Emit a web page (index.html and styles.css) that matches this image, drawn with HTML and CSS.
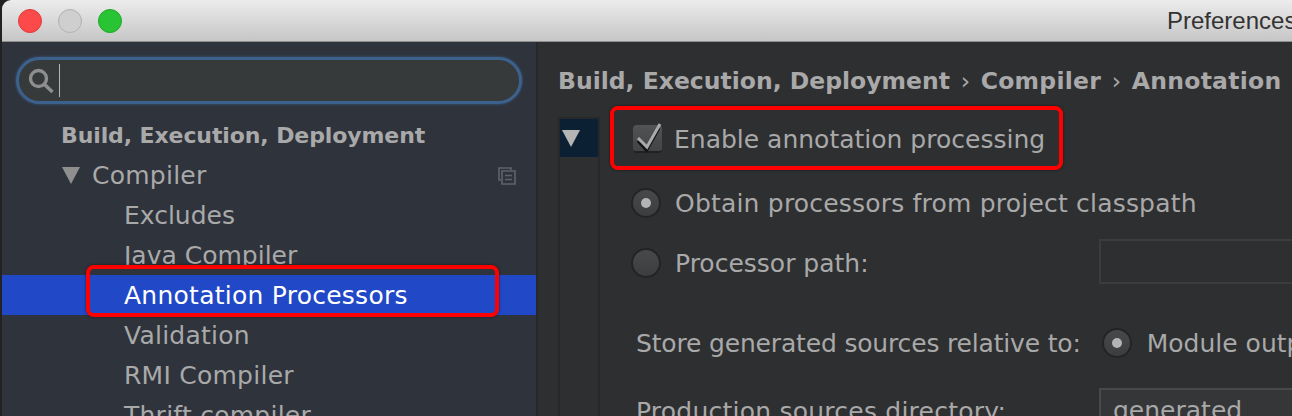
FILE: index.html
```html
<!DOCTYPE html>
<html lang="en">
<head>
  <meta charset="UTF-8">
  <title>Preferences</title>
  <link rel="stylesheet" href="styles.css">
</head>
<body>
  <div class="window">
    <!-- Title bar -->
    <header class="titlebar">
      <span class="light light-close"></span>
      <span class="light light-min"></span>
      <span class="light light-zoom"></span>
      <span class="title">Preferences</span>
    </header>

    <div class="content">
      <!-- Settings tree -->
      <aside class="sidebar">
        <div class="search">
          <svg class="search-icon" width="26" height="26" viewBox="0 0 26 26">
            <circle cx="10.5" cy="10.5" r="8" fill="none" stroke="#8e8e8e" stroke-width="3.4"/>
            <path d="M16.5 16.5L24.5 24" fill="none" stroke="#8e8e8e" stroke-width="3.6"/>
          </svg>
          <span class="caret"></span>
        </div>
        <ul class="tree">
          <li class="tree-row tree-group">Build, Execution, Deployment</li>
          <li class="tree-row tree-parent">
            <span class="arrow"></span>
            <span>Compiler</span>
            <svg class="copy-icon" width="18" height="18" viewBox="0 0 18 18">
              <path d="M13 3V1H1V13H3" fill="none" stroke="#5f636b" stroke-width="1.6"/>
              <path d="M4 4H17V17H4Z M7 8.5H14 M7 12.5H14" fill="none" stroke="#5f636b" stroke-width="1.6"/>
            </svg>
          </li>
          <li class="tree-row tree-child tree-tight">Excludes</li>
          <li class="tree-row tree-child tree-tight">Java Compiler</li>
          <li class="tree-row tree-child tree-selected">
            Annotation Processors
            <span class="highlight highlight-tree"></span>
          </li>
          <li class="tree-row tree-child">Validation</li>
          <li class="tree-row tree-child">RMI Compiler</li>
          <li class="tree-row tree-child">Thrift compiler</li>
        </ul>
      </aside>

      <!-- Annotation processor settings -->
      <main class="panel">
        <div class="crumbs">Build, Execution, Deployment <span class="sep">›</span> <span class="crumb-wide">Compiler</span> <span class="sep">›</span> <span class="crumb-wide">Annotation</span></div>
        <div class="panel-body">
          <div class="profiles">
            <div class="profile-head"><span class="arrow arrow-light"></span></div>
          </div>
          <div class="form">
            <div class="row row-check">
              <span class="checkbox">
                <svg width="29" height="28" viewBox="0 0 29 28">
                  <path d="M5 16L13.500 25.500L26 3" fill="none" stroke="#141414" stroke-width="3"/>
                  <path d="M5 13L14 22L27 -1" fill="none" stroke="#aaa" stroke-width="3"/>
                </svg>
              </span>
              <span>Enable annotation processing</span>
              <span class="highlight highlight-check"></span>
            </div>
            <div class="row row-obtain">
              <span class="radio radio-on"></span>
              <span>Obtain processors from project classpath</span>
            </div>
            <div class="row row-path">
              <span class="radio"></span>
              <span class="label">Processor path:</span>
              <span class="field field-path"></span>
            </div>
            <div class="row row-store">
              <span class="label">Store generated sources relative to:</span>
              <span class="radio radio-on"></span>
              <span>Module output</span>
            </div>
            <div class="row row-prod">
              <span class="label">Production sources directory:</span>
              <span class="field field-filled">generated</span>
            </div>
          </div>
        </div>
      </main>
    </div>
  </div>
</body>
</html>
```

FILE: styles.css
```css
/* General Page Styling */
html, body {
  height: 416px;
  overflow: hidden;
}
body {
  margin: 0;
  background-color: #222;
  font-family: "DejaVu Sans", sans-serif;
  font-size: 25px;
  color: #a9a9a9;
}
ul {
  margin: 0;
  padding: 0;
  list-style: none;
}
.window {
  margin-left: 2px;
  height: 416px;
  display: flex;
  flex-direction: column;
  overflow: hidden;
  border-top-left-radius: 9px;
}

/* Title bar */
.titlebar {
  flex: none;
  height: 42px;
  display: flex;
  align-items: center;
  gap: 16px;
  padding-left: 16px;
  box-sizing: border-box;
  background: linear-gradient(#ececec, #c6c6c6);
  border-bottom: 1px solid #8f8f8f;
}
.light {
  flex: none;
  width: 24px;
  height: 24px;
  border-radius: 50%;
  box-sizing: border-box;
  border: 1px solid transparent;
}
.light-close { background: #fc4a4a; border-color: #df3a3c; }
.light-min { background: #cfcfcf; border-color: #b0b0b0; }
.light-zoom { background: #29c433; border-color: #20a82a; }
.title {
  flex: none;
  margin-left: 1029px;
  font-family: "Liberation Sans", sans-serif;
  font-size: 24px;
  color: #333;
  white-space: nowrap;
}

.content {
  flex: 1;
  display: flex;
  min-height: 0;
}

/* Sidebar */
.sidebar {
  flex: none;
  width: 534px;
  background-color: #2f333c;
  border-right: 2px solid #27282b;
}
.search {
  margin: 15px 0 0 14px;
  width: 506px;
  height: 47px;
  box-sizing: border-box;
  display: flex;
  align-items: center;
  gap: 5px;
  padding-left: 9px;
  background-color: #373a3b;
  border: 3px solid #3c618c;
  border-radius: 24px;
  box-shadow: 0 0 3px #3c618c;
}
.search-icon {
  flex: none;
}
.caret {
  width: 1px;
  height: 33px;
  background-color: #b5b5b5;
}
.tree {
  margin-top: 11px;
}
.tree-row {
  position: relative;
  height: 40px;
  display: flex;
  align-items: center;
  white-space: nowrap;
  letter-spacing: 0.25px;
}
.tree-group {
  padding-left: 59px;
  font-weight: bold;
  font-size: 22px;
  letter-spacing: -0.1px;
}
.tree-parent {
  padding-left: 60px;
}
.tree-parent .arrow {
  margin-right: 12px;
}
.copy-icon {
  position: absolute;
  left: 496px;
  top: 12px;
}
.tree-child {
  padding-left: 122px;
}
.tree-tight {
  letter-spacing: 0;
}
.tree-selected {
  background-color: #2148c6;
  color: #fff;
}
.arrow {
  width: 0;
  height: 0;
  border-left: 9px solid transparent;
  border-right: 9px solid transparent;
  border-top: 17px solid #8f8f8f;
}
.arrow-light {
  border-top-color: #b5b5b5;
}

/* Red callouts drawn on top of the screenshot */
.highlight {
  position: absolute;
  box-sizing: border-box;
  border: 4px solid #f00;
  border-radius: 8px;
  box-shadow: 0 0 3px rgba(0, 0, 0, 0.5);
}
.highlight-tree {
  left: 84px;
  top: -10px;
  width: 413px;
  height: 52px;
}
.highlight-check {
  left: -21px;
  top: -14px;
  width: 453px;
  height: 64px;
}

/* Right panel */
.panel {
  flex: 1;
  min-width: 0;
  background-color: #2e2f31;
  padding: 24px 0 0 20px;
  overflow: hidden;
}
.crumbs {
  height: 30px;
  line-height: 30px;
  font-weight: bold;
  font-size: 23.5px;
  white-space: nowrap;
}
.sep {
  margin: 0 2.5px;
  font-weight: normal;
}
.crumb-wide {
  letter-spacing: 0.25px;
}
.panel-body {
  display: flex;
  margin-top: 21px;
}
.profiles {
  flex: none;
  width: 42px;
  height: 300px;
  box-sizing: border-box;
  border: 2px solid #27282b;
  border-bottom: none;
}
.profile-head {
  height: 38px;
  display: flex;
  align-items: center;
  padding-left: 2px;
  background-color: #0c2034;
}
.form {
  flex: 1;
  min-width: 0;
  padding: 3px 0 0 31px;
}
.row {
  position: relative;
  display: flex;
  align-items: center;
  white-space: nowrap;
}
.row-check {
  height: 38px;
  gap: 12px;
  padding-left: 2px;
}
.row-obtain {
  margin-top: 26px;
  height: 38px;
  gap: 14px;
  letter-spacing: 0.2px;
}
.row-path {
  margin-top: 19px;
  height: 44px;
  gap: 14px;
}
.row-path .label {
  flex: none;
  width: 410px;
}
.row-store {
  margin-top: 39px;
  height: 38px;
  padding-left: 5px;
}
.row-store .label {
  flex: none;
  margin-right: 21px;
  letter-spacing: -0.17px;
}
.row-store .radio {
  margin-right: 15px;
}
.row-prod {
  margin-top: 27px;
  height: 44px;
  padding-left: 5px;
}
.row-prod .label {
  flex: none;
  width: 463px;
  letter-spacing: 0.23px;
}
.checkbox {
  flex: none;
  position: relative;
  width: 29px;
  height: 28px;
  box-sizing: border-box;
  background: linear-gradient(#525355, #434446);
  border-bottom: 2px solid #202123;
  border-radius: 4px;
}
.checkbox svg {
  position: absolute;
  left: 0;
  top: 0;
  overflow: visible;
}
.radio {
  flex: none;
  width: 30px;
  height: 30px;
  box-sizing: border-box;
  border-radius: 50%;
  background: linear-gradient(#48494b, #3c3d3f);
  border: 2px solid #232426;
  display: flex;
  align-items: center;
  justify-content: center;
}
.radio-on::after {
  content: "";
  width: 10px;
  height: 10px;
  border-radius: 50%;
  background-color: #b4b4b4;
}
.field {
  flex: none;
  width: 300px;
  height: 46px;
  box-sizing: border-box;
  border: 2px solid #3b3c3e;
}
.field-path {
  height: 45px;
  margin-top: -3px;
}
.field-filled {
  padding-left: 12px;
  line-height: 42px;
  background-color: #353637;
  border-color: #48494b;
}
```
